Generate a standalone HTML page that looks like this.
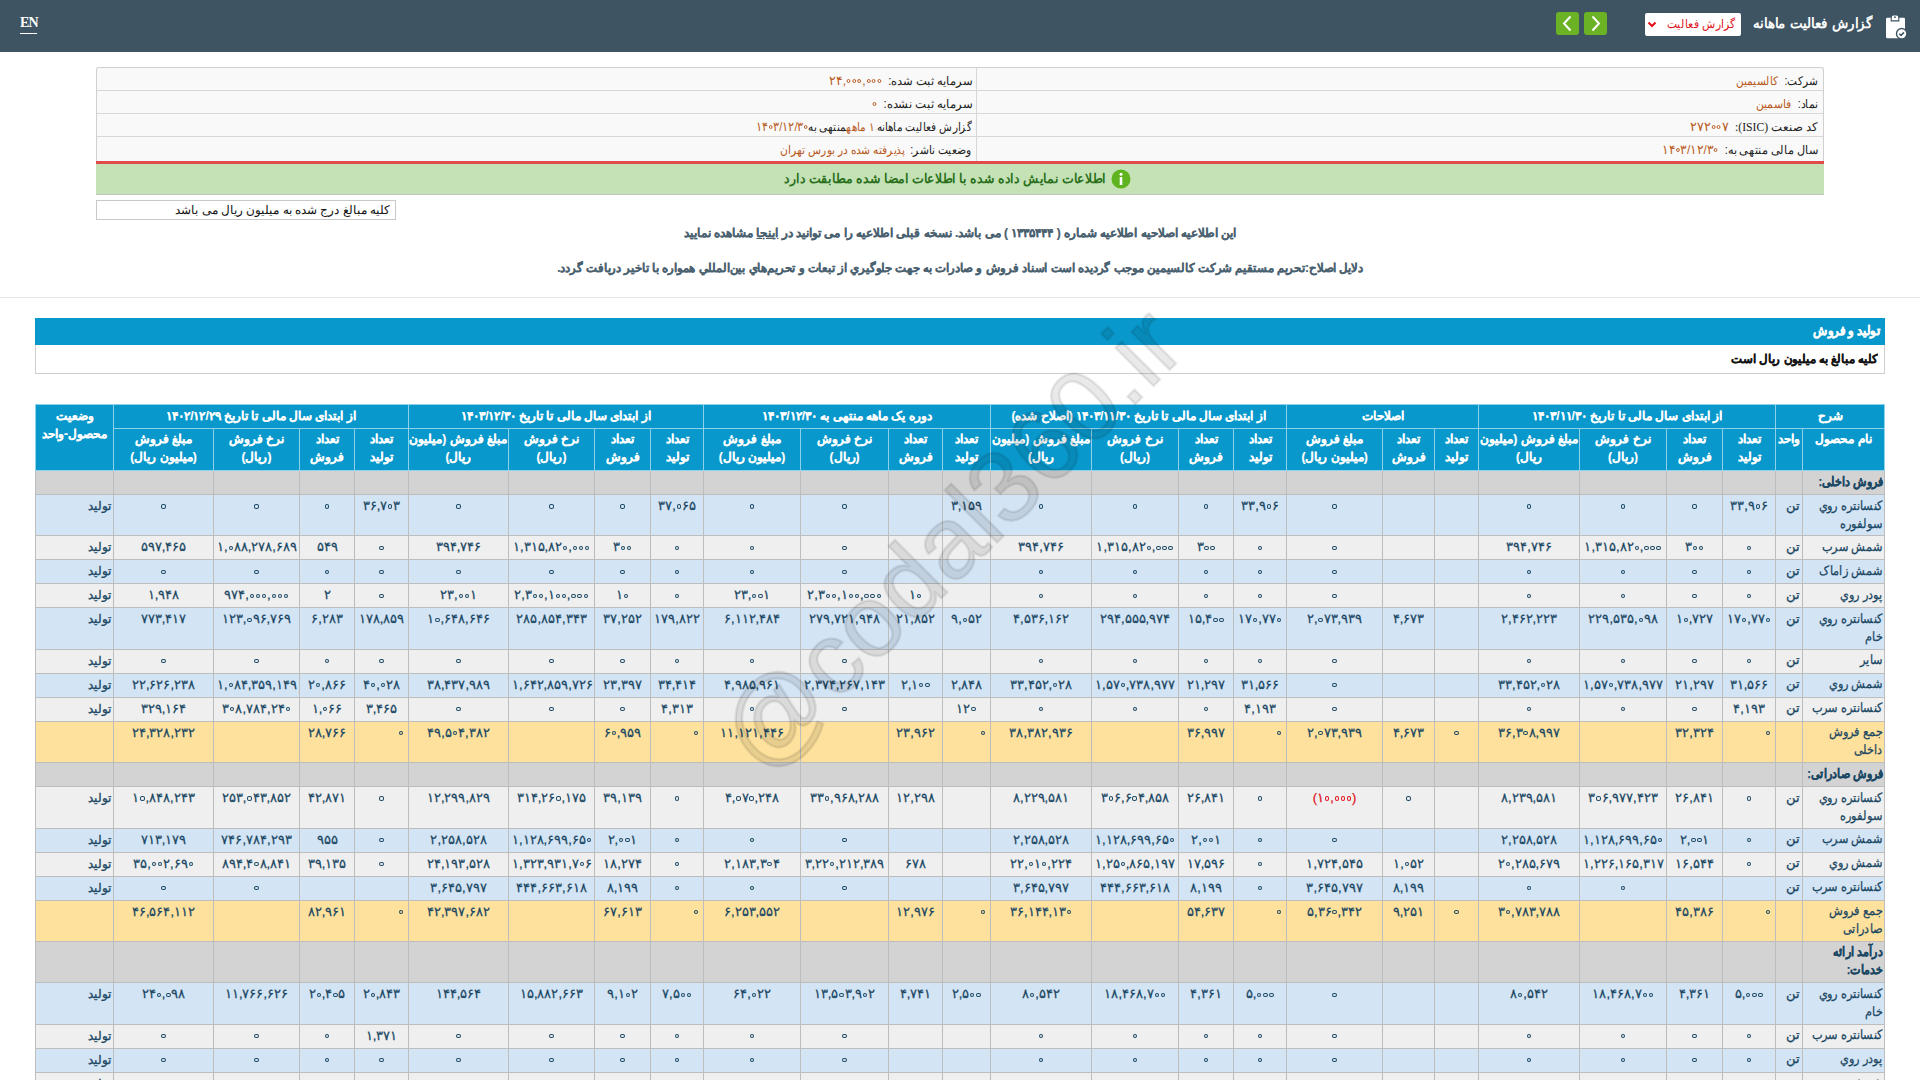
<!DOCTYPE html>
<html lang="fa" dir="rtl">
<head>
<meta charset="utf-8">
<title>گزارش فعالیت ماهانه</title>
<style>
*{box-sizing:border-box}
html,body{margin:0;padding:0;background:#fff;width:1920px;height:1080px;overflow:hidden}
body{font-family:"Liberation Sans",sans-serif;direction:rtl;position:relative;color:#333}
.nav{position:absolute;left:0;top:0;width:1920px;height:52px;background:#3e5462}
.en{position:absolute;left:20px;top:14.5px;font-family:"Liberation Serif",serif;color:#fff;font-size:14px;font-weight:bold;line-height:16px;direction:ltr;letter-spacing:-0.9px}
.en:after{content:"";position:absolute;left:0;right:1px;top:18.5px;height:1.4px;background:#fff}
.ttl{transform:scaleX(0.955);transform-origin:100% 50%;position:absolute;right:47px;top:13px;color:#fff;font-size:14px;font-weight:bold;line-height:20px;white-space:nowrap}
.clip{position:absolute;left:1884px;top:14px;width:26px;height:26px}
.sel{position:absolute;left:1645px;top:13px;width:96px;height:23px;background:#fff;border-radius:2px}
.sel span{transform:scaleX(0.9);transform-origin:100% 50%;position:absolute;right:6px;top:2px;color:#e0141e;font-size:12px;line-height:18px;white-space:nowrap}
.sel svg{position:absolute;left:2px;top:8px}
.gb{position:absolute;top:12px;width:23px;height:23px;background:#6bb325;border-radius:3px}
.gb svg{position:absolute;left:5px;top:3px}
.info{position:absolute;left:96px;top:67px;width:1728px;height:95px;background:#f9f9f9;border:1px solid #d0d0d0;border-bottom:none;border-radius:3px 3px 0 0}
.info .row{position:absolute;left:0;right:0;height:23px;border-top:1px solid #d8d8d8}
.info .vl{position:absolute;left:879px;top:0;bottom:1px;width:1px;background:#d8d8d8}
.info .c{position:absolute;top:2px;font-size:12px;line-height:18px;white-space:nowrap;color:#222}
.info .c b{font-weight:normal;color:#b85a22}
.info .c b.n{direction:ltr;unicode-bidi:isolate;display:inline-block;font-size:12.5px}
.info .c b.n i{display:inline-block;width:4px;height:4px;border:1.2px solid currentColor;border-radius:50%;margin:0 0.8px;vertical-align:2px}
.red{position:absolute;left:96px;top:161px;width:1728px;height:3px;background:#e24b4b}
.green{position:absolute;left:96px;top:164px;width:1728px;height:31px;background:#c4e2b6;border-bottom:1px solid #bcc6b8}
.green span{transform:scaleX(0.96);transform-origin:100% 50%;position:absolute;right:718px;top:5px;color:#2a701b;font-weight:bold;font-size:12.5px;line-height:20px;white-space:nowrap}
.green svg{position:absolute;left:1015px;top:5px}
.note{position:absolute;left:96px;top:200px;width:300px;height:20px;border:1px solid #c8c8c8;background:#fff}
.note span{position:absolute;right:5px;top:1px;font-size:12px;line-height:16px;color:#111;white-space:nowrap}
.l1,.l2{-webkit-text-stroke:0.2px #4a6170;position:absolute;left:0;width:1920px;text-align:center;font-weight:bold;color:#4a6170;font-size:12px;line-height:16px;white-space:nowrap}
.l1{top:225px}.l2{top:260px;transform:scaleX(0.975)}
.hr{position:absolute;left:0;top:297px;width:1920px;height:1px;background:#e6e6e6}
.bar{position:absolute;left:35px;top:318px;width:1850px;height:27px;background:#0998cb}
.bar span{transform:scaleX(0.9);transform-origin:100% 50%;-webkit-text-stroke:0.3px #fff;position:absolute;right:5px;top:4px;color:#fff;font-weight:bold;font-size:13px;line-height:18px}
.unit{position:absolute;left:35px;top:345px;width:1850px;height:29px;border:1px solid #cfcfcf;border-top:none;background:#fff}
.unit span{transform:scaleX(0.98);transform-origin:100% 50%;-webkit-text-stroke:0.2px #111;position:absolute;right:6px;top:5px;color:#111;font-weight:bold;font-size:12px;line-height:18px}
table.t{position:absolute;left:35px;top:404px;width:1850px;border-collapse:collapse;table-layout:fixed;font-size:12px}
.t th{-webkit-text-stroke:0.15px #fff;background:#0998cb;color:#fff;font-weight:bold;border:1px solid #8fd0ea;padding:0 1px;line-height:18px;vertical-align:top;text-align:center;overflow:hidden;white-space:nowrap}
.t tr.hr1 th{height:24px;padding-top:2px}
.t tr.hr2 th{height:42px;padding-top:1px}
.t td{border:1px solid #bdbdbd;padding:3px 3px 0;vertical-align:top;text-align:center;color:#1a4763;line-height:18px;white-space:nowrap;overflow:hidden}
.t td.nm{text-align:right;white-space:nowrap;padding-right:1px;padding-top:1.5px}
.t td.nm span{display:inline-block;transform:scaleX(0.87);transform-origin:100% 50%;font-size:13px;-webkit-text-stroke:0.25px currentColor}
.t td.nm.b span{transform:scaleX(0.85)}
.t td.nm.b{font-weight:bold}
.t td.u{text-align:right;padding-right:2px;padding-top:1.7px;font-size:13px;-webkit-text-stroke:0.3px currentColor}
.t td.st{text-align:right;padding-right:2px;padding-top:2px;-webkit-text-stroke:0.35px currentColor}
.t td.neg{color:#e0141e;-webkit-text-stroke:0.1px currentColor}
.t td.n{padding-top:2px;direction:ltr;font-size:13px;font-weight:normal;-webkit-text-stroke:0.25px currentColor}
.t td.n i{display:inline-block;width:4.3px;height:4.2px;border:1.3px solid currentColor;border-radius:50%;margin:0 0.9px;vertical-align:1.5px}
.t td.r{text-align:right;padding-right:4px}
.t tr.h1 td{height:24px}
.t tr.h2 td{height:41.4px}
.t tr.b td{background:#d3e4f5}
.t tr.g td{background:#efefef}
.t tr.y td{background:#fde19c}
.t tr.s td{background:#d3d3d3}
.wm{position:absolute;left:951px;top:539px;width:0;height:0}
.wm span{position:absolute;left:-400px;top:-60px;width:800px;text-align:center;font-size:102px;line-height:120px;font-weight:normal;color:rgba(0,0,0,0.085);transform:rotate(-45deg);white-space:nowrap;direction:ltr;font-family:"Liberation Sans",sans-serif;-webkit-text-stroke:2.5px rgba(0,0,0,0.085)}
</style>
</head>
<body>
<div class="nav">
  <div class="en">EN</div>
  <svg class="clip" viewBox="0 0 26 26" width="26" height="26">
    <rect x="2" y="3.7" width="19" height="20.6" rx="1.3" fill="#fff"/>
    <path d="M7.2 6.9 L7.2 3.6 Q7.2 1 9.5 1 L12.5 1 Q14.8 1 14.8 3.6 L14.8 6.9 Z" fill="#fff" stroke="#3e5462" stroke-width="1.1"/>
    <circle cx="11" cy="3.2" r="0.9" fill="#3e5462"/>
    <circle cx="17.7" cy="19.7" r="5.2" fill="#fff" stroke="#3e5462" stroke-width="1.4"/>
    <path d="M15.3 19.8 l1.7 1.6 l3 -3" fill="none" stroke="#3e5462" stroke-width="1.5"/>
  </svg>
  <div class="ttl">گزارش فعالیت ماهانه</div>
  <div class="sel"><span>گزارش فعالیت</span>
    <svg width="10" height="7" viewBox="0 0 10 7"><path d="M1.5 1.5 L5 5 L8.5 1.5" fill="none" stroke="#e0141e" stroke-width="2.2"/></svg>
  </div>
  <div class="gb" style="left:1584px"><svg width="13" height="17" viewBox="0 0 13 17"><path d="M3.5 1.5 L10 8.5 L3.5 15.5" fill="none" stroke="#fff" stroke-width="2"/></svg></div>
  <div class="gb" style="left:1556px"><svg width="13" height="17" viewBox="0 0 13 17"><path d="M9.5 1.5 L3 8.5 L9.5 15.5" fill="none" stroke="#fff" stroke-width="2"/></svg></div>
</div>

<div class="info">
  <div class="row" style="top:-1px;border-top:none"></div>
  <div class="row" style="top:22px"></div>
  <div class="row" style="top:45px"></div>
  <div class="row" style="top:68px"></div>
  <div class="vl"></div>
  <div class="c" style="right:5px;top:4px;transform:scaleX(0.875);transform-origin:100% 50%">شرکت: &nbsp;<b>کالسیمین</b></div>
  <div class="c" style="right:5px;top:27px;transform:scaleX(0.905);transform-origin:100% 50%">نماد: &nbsp;<b>فاسمین</b></div>
  <div class="c" style="right:5px;top:50px;transform:scaleX(0.975);transform-origin:100% 50%">کد صنعت <span style="font-family:'Liberation Serif',serif">(ISIC):</span> &nbsp;<b class="n">۲۷۲<i></i><i></i>۷</b></div>
  <div class="c" style="right:5px;top:73px;transform:scaleX(0.94);transform-origin:100% 50%">سال مالی منتهی به: &nbsp;<b class="n">۱۴<i></i>۳/۱۲/۳<i></i></b></div>
  <div class="c" style="right:851px;top:4px;transform:scaleX(0.965);transform-origin:100% 50%">سرمایه ثبت شده: &nbsp;<b class="n">۲۴,<i></i><i></i><i></i>,<i></i><i></i><i></i></b></div>
  <div class="c" style="right:851px;top:27px;transform:scaleX(0.975);transform-origin:100% 50%">سرمایه ثبت نشده: &nbsp;<b class="n"><i></i></b></div>
  <div class="c" style="right:851px;top:50px;transform:scaleX(0.875);transform-origin:100% 50%">گزارش فعالیت ماهانه <b>۱ ماهه</b>منتهی به<b class="n">۱۴<i></i>۳/۱۲/۳<i></i></b></div>
  <div class="c" style="right:851px;top:73px;transform:scaleX(0.893);transform-origin:100% 50%">وضعیت ناشر: &nbsp;<b>پذیرفته شده در بورس تهران</b></div>
</div>
<div class="red"></div>
<div class="green"><span>اطلاعات نمایش داده شده با اطلاعات امضا شده مطابقت دارد</span>
  <svg width="20" height="20" viewBox="0 0 20 20"><circle cx="10" cy="10" r="9.5" fill="#5fb31e"/><circle cx="10" cy="5.2" r="1.5" fill="#fff"/><rect x="8.7" y="8" width="2.6" height="8" fill="#fff"/></svg>
</div>
<div class="note"><span>کلیه مبالغ درج شده به میلیون ریال می باشد</span></div>
<div class="l1">این اطلاعیه اصلاحیه اطلاعیه شماره ( ۱۳۳۵۴۴۴ ) می باشد. نسخه قبلی اطلاعیه را می توانید در <u>اینجا</u> مشاهده نمایید</div>
<div class="l2">دلایل اصلاح:تحریم مستقیم شرکت کالسیمین موجب گردیده است اسناد فروش و صادرات به جهت جلوگيري از تبعات و تحريم‌هاي بين‌المللي همواره با تاخیر دريافت گردد.</div>
<div class="hr"></div>
<div class="bar"><span>تولید و فروش</span></div>
<div class="unit"><span>کلیه مبالغ به میلیون ریال است</span></div>

<table class="t">
<colgroup><col style="width:82px"><col style="width:27px"><col style="width:53px"><col style="width:56px"><col style="width:87px"><col style="width:101px"><col style="width:44px"><col style="width:52px"><col style="width:96px"><col style="width:53px"><col style="width:55px"><col style="width:87px"><col style="width:101px"><col style="width:48px"><col style="width:54px"><col style="width:88px"><col style="width:97px"><col style="width:53px"><col style="width:56px"><col style="width:86px"><col style="width:100px"><col style="width:54px"><col style="width:55px"><col style="width:86px"><col style="width:100px"><col style="width:78px"></colgroup>
<thead>
<tr class="hr1"><th colspan="2">شرح</th><th colspan="4">از ابتدای سال مالی تا تاریخ ۱۴۰۳/۱۱/۳۰</th><th colspan="3">اصلاحات</th><th colspan="4">از ابتدای سال مالی تا تاریخ ۱۴۰۳/۱۱/۳۰ (اصلاح شده)</th><th colspan="4">دوره یک ماهه منتهی به ۱۴۰۳/۱۲/۳۰</th><th colspan="4">از ابتدای سال مالی تا تاریخ ۱۴۰۳/۱۲/۳۰</th><th colspan="4">از ابتدای سال مالی تا تاریخ ۱۴۰۲/۱۲/۲۹</th><th rowspan="2">وضعیت<br>محصول-واحد</th></tr>
<tr class="hr2"><th>نام محصول</th><th>واحد</th>
<th>تعداد<br>تولید</th><th>تعداد<br>فروش</th><th>نرخ فروش<br>(ریال)</th><th>مبلغ فروش (میلیون<br>ریال)</th>
<th>تعداد<br>تولید</th><th>تعداد<br>فروش</th><th>مبلغ فروش<br>(میلیون ریال)</th>
<th>تعداد<br>تولید</th><th>تعداد<br>فروش</th><th>نرخ فروش<br>(ریال)</th><th>مبلغ فروش (میلیون<br>ریال)</th>
<th>تعداد<br>تولید</th><th>تعداد<br>فروش</th><th>نرخ فروش<br>(ریال)</th><th>مبلغ فروش<br>(میلیون ریال)</th>
<th>تعداد<br>تولید</th><th>تعداد<br>فروش</th><th>نرخ فروش<br>(ریال)</th><th>مبلغ فروش (میلیون<br>ریال)</th>
<th>تعداد<br>تولید</th><th>تعداد<br>فروش</th><th>نرخ فروش<br>(ریال)</th><th>مبلغ فروش<br>(میلیون ریال)</th>
</tr>
</thead>
<tbody>
<tr class="s h1"><td class="nm b"><span>فروش داخلی:</span></td><td></td><td></td><td></td><td></td><td></td><td></td><td></td><td></td><td></td><td></td><td></td><td></td><td></td><td></td><td></td><td></td><td></td><td></td><td></td><td></td><td></td><td></td><td></td><td></td><td></td></tr>
<tr class="b h2"><td class="nm"><span>کنسانتره روي<br>سولفوره</span></td><td class="u">تن</td><td class="n">۳۳,۹<i></i>۶</td><td class="n"><i></i></td><td class="n"><i></i></td><td class="n"><i></i></td><td></td><td></td><td class="n"><i></i></td><td class="n">۳۳,۹<i></i>۶</td><td class="n"><i></i></td><td class="n"><i></i></td><td class="n"><i></i></td><td class="n">۳,۱۵۹</td><td></td><td class="n"><i></i></td><td class="n"><i></i></td><td class="n">۳۷,<i></i>۶۵</td><td class="n"><i></i></td><td class="n"><i></i></td><td class="n"><i></i></td><td class="n">۳۶,۷<i></i>۳</td><td class="n"><i></i></td><td class="n"><i></i></td><td class="n"><i></i></td><td class="st">تولید</td></tr>
<tr class="g h1"><td class="nm"><span>شمش سرب</span></td><td class="u">تن</td><td class="n"><i></i></td><td class="n">۳<i></i><i></i></td><td class="n">۱,۳۱۵,۸۲<i></i>,<i></i><i></i><i></i></td><td class="n">۳۹۴,۷۴۶</td><td></td><td></td><td class="n"><i></i></td><td class="n"><i></i></td><td class="n">۳<i></i><i></i></td><td class="n">۱,۳۱۵,۸۲<i></i>,<i></i><i></i><i></i></td><td class="n">۳۹۴,۷۴۶</td><td></td><td></td><td class="n"><i></i></td><td class="n"><i></i></td><td class="n"><i></i></td><td class="n">۳<i></i><i></i></td><td class="n">۱,۳۱۵,۸۲<i></i>,<i></i><i></i><i></i></td><td class="n">۳۹۴,۷۴۶</td><td class="n"><i></i></td><td class="n">۵۴۹</td><td class="n">۱,<i></i>۸۸,۲۷۸,۶۸۹</td><td class="n">۵۹۷,۴۶۵</td><td class="st">تولید</td></tr>
<tr class="b h1"><td class="nm"><span>شمش زاماک</span></td><td class="u">تن</td><td class="n"><i></i></td><td class="n"><i></i></td><td class="n"><i></i></td><td class="n"><i></i></td><td></td><td></td><td class="n"><i></i></td><td class="n"><i></i></td><td class="n"><i></i></td><td class="n"><i></i></td><td class="n"><i></i></td><td></td><td></td><td class="n"><i></i></td><td class="n"><i></i></td><td class="n"><i></i></td><td class="n"><i></i></td><td class="n"><i></i></td><td class="n"><i></i></td><td class="n"><i></i></td><td class="n"><i></i></td><td class="n"><i></i></td><td class="n"><i></i></td><td class="st">تولید</td></tr>
<tr class="g h1"><td class="nm"><span>پودر روي</span></td><td class="u">تن</td><td class="n"><i></i></td><td class="n"><i></i></td><td class="n"><i></i></td><td class="n"><i></i></td><td></td><td></td><td class="n"><i></i></td><td class="n"><i></i></td><td class="n"><i></i></td><td class="n"><i></i></td><td class="n"><i></i></td><td></td><td class="n">۱<i></i></td><td class="n">۲,۳<i></i><i></i>,۱<i></i><i></i>,<i></i><i></i><i></i></td><td class="n">۲۳,<i></i><i></i>۱</td><td class="n"><i></i></td><td class="n">۱<i></i></td><td class="n">۲,۳<i></i><i></i>,۱<i></i><i></i>,<i></i><i></i><i></i></td><td class="n">۲۳,<i></i><i></i>۱</td><td class="n"><i></i></td><td class="n">۲</td><td class="n">۹۷۴,<i></i><i></i><i></i>,<i></i><i></i><i></i></td><td class="n">۱,۹۴۸</td><td class="st">تولید</td></tr>
<tr class="b h2"><td class="nm"><span>کنسانتره روي<br>خام</span></td><td class="u">تن</td><td class="n">۱۷<i></i>,۷۷<i></i></td><td class="n">۱<i></i>,۷۲۷</td><td class="n">۲۲۹,۵۳۵,<i></i>۹۸</td><td class="n">۲,۴۶۲,۲۲۳</td><td></td><td class="n">۴,۶۷۳</td><td class="n">۲,<i></i>۷۳,۹۳۹</td><td class="n">۱۷<i></i>,۷۷<i></i></td><td class="n">۱۵,۴<i></i><i></i></td><td class="n">۲۹۴,۵۵۵,۹۷۴</td><td class="n">۴,۵۳۶,۱۶۲</td><td class="n">۹,<i></i>۵۲</td><td class="n">۲۱,۸۵۲</td><td class="n">۲۷۹,۷۲۱,۹۴۸</td><td class="n">۶,۱۱۲,۴۸۴</td><td class="n">۱۷۹,۸۲۲</td><td class="n">۳۷,۲۵۲</td><td class="n">۲۸۵,۸۵۴,۳۴۳</td><td class="n">۱<i></i>,۶۴۸,۶۴۶</td><td class="n">۱۷۸,۸۵۹</td><td class="n">۶,۲۸۳</td><td class="n">۱۲۳,<i></i>۹۶,۷۶۹</td><td class="n">۷۷۳,۴۱۷</td><td class="st">تولید</td></tr>
<tr class="g h1"><td class="nm"><span>ساير</span></td><td class="u">تن</td><td class="n"><i></i></td><td class="n"><i></i></td><td class="n"><i></i></td><td class="n"><i></i></td><td></td><td></td><td class="n"><i></i></td><td class="n"><i></i></td><td class="n"><i></i></td><td class="n"><i></i></td><td class="n"><i></i></td><td></td><td></td><td class="n"><i></i></td><td class="n"><i></i></td><td class="n"><i></i></td><td class="n"><i></i></td><td class="n"><i></i></td><td class="n"><i></i></td><td class="n"><i></i></td><td class="n"><i></i></td><td class="n"><i></i></td><td class="n"><i></i></td><td class="st">تولید</td></tr>
<tr class="b h1"><td class="nm"><span>شمش روي</span></td><td class="u">تن</td><td class="n">۳۱,۵۶۶</td><td class="n">۲۱,۲۹۷</td><td class="n">۱,۵۷<i></i>,۷۳۸,۹۷۷</td><td class="n">۳۳,۴۵۲,<i></i>۲۸</td><td></td><td></td><td class="n"><i></i></td><td class="n">۳۱,۵۶۶</td><td class="n">۲۱,۲۹۷</td><td class="n">۱,۵۷<i></i>,۷۳۸,۹۷۷</td><td class="n">۳۳,۴۵۲,<i></i>۲۸</td><td class="n">۲,۸۴۸</td><td class="n">۲,۱<i></i><i></i></td><td class="n">۲,۳۷۴,۲۶۷,۱۴۳</td><td class="n">۴,۹۸۵,۹۶۱</td><td class="n">۳۴,۴۱۴</td><td class="n">۲۳,۳۹۷</td><td class="n">۱,۶۴۲,۸۵۹,۷۲۶</td><td class="n">۳۸,۴۳۷,۹۸۹</td><td class="n">۴<i></i>,<i></i>۲۸</td><td class="n">۲<i></i>,۸۶۶</td><td class="n">۱,<i></i>۸۴,۳۵۹,۱۴۹</td><td class="n">۲۲,۶۲۶,۲۳۸</td><td class="st">تولید</td></tr>
<tr class="g h1"><td class="nm"><span>کنسانتره سرب</span></td><td class="u">تن</td><td class="n">۴,۱۹۳</td><td class="n"><i></i></td><td class="n"><i></i></td><td class="n"><i></i></td><td></td><td></td><td class="n"><i></i></td><td class="n">۴,۱۹۳</td><td class="n"><i></i></td><td class="n"><i></i></td><td class="n"><i></i></td><td class="n">۱۲<i></i></td><td></td><td class="n"><i></i></td><td class="n"><i></i></td><td class="n">۴,۳۱۳</td><td class="n"><i></i></td><td class="n"><i></i></td><td class="n"><i></i></td><td class="n">۳,۴۶۵</td><td class="n">۱,<i></i>۶۶</td><td class="n">۳<i></i>۸,۷۸۴,۲۴<i></i></td><td class="n">۳۲۹,۱۶۴</td><td class="st">تولید</td></tr>
<tr class="y h2"><td class="nm t"><span>جمع فروش<br>داخلی</span></td><td class="u"></td><td class="r n"><i></i></td><td class="n">۳۲,۳۲۴</td><td></td><td class="n">۳۶,۳<i></i>۸,۹۹۷</td><td class="n"><i></i></td><td class="n">۴,۶۷۳</td><td class="n">۲,<i></i>۷۳,۹۳۹</td><td class="r n"><i></i></td><td class="n">۳۶,۹۹۷</td><td></td><td class="n">۳۸,۳۸۲,۹۳۶</td><td class="r n"><i></i></td><td class="n">۲۳,۹۶۲</td><td></td><td class="n">۱۱,۱۲۱,۴۴۶</td><td class="r n"><i></i></td><td class="n">۶<i></i>,۹۵۹</td><td></td><td class="n">۴۹,۵<i></i>۴,۳۸۲</td><td class="r n"><i></i></td><td class="n">۲۸,۷۶۶</td><td></td><td class="n">۲۴,۳۲۸,۲۳۲</td><td class="st"></td></tr>
<tr class="s h1"><td class="nm b"><span>فروش صادراتی:</span></td><td></td><td></td><td></td><td></td><td></td><td></td><td></td><td></td><td></td><td></td><td></td><td></td><td></td><td></td><td></td><td></td><td></td><td></td><td></td><td></td><td></td><td></td><td></td><td></td><td></td></tr>
<tr class="g h2"><td class="nm"><span>کنسانتره روي<br>سولفوره</span></td><td class="u">تن</td><td class="n"><i></i></td><td class="n">۲۶,۸۴۱</td><td class="n">۳<i></i>۶,۹۷۷,۴۲۳</td><td class="n">۸,۲۳۹,۵۸۱</td><td></td><td class="n"><i></i></td><td class="neg n">(۱<i></i>,<i></i><i></i><i></i>)</td><td class="n"><i></i></td><td class="n">۲۶,۸۴۱</td><td class="n">۳<i></i>۶,۶<i></i>۴,۸۵۸</td><td class="n">۸,۲۲۹,۵۸۱</td><td></td><td class="n">۱۲,۲۹۸</td><td class="n">۳۳<i></i>,۹۶۸,۲۸۸</td><td class="n">۴,<i></i>۷<i></i>,۲۴۸</td><td class="n"><i></i></td><td class="n">۳۹,۱۳۹</td><td class="n">۳۱۴,۲۶<i></i>,۱۷۵</td><td class="n">۱۲,۲۹۹,۸۲۹</td><td class="n"><i></i></td><td class="n">۴۲,۸۷۱</td><td class="n">۲۵۳,<i></i>۴۳,۸۵۲</td><td class="n">۱<i></i>,۸۴۸,۲۴۳</td><td class="st">تولید</td></tr>
<tr class="b h1"><td class="nm"><span>شمش سرب</span></td><td class="u">تن</td><td class="n"><i></i></td><td class="n">۲,<i></i><i></i>۱</td><td class="n">۱,۱۲۸,۶۹۹,۶۵<i></i></td><td class="n">۲,۲۵۸,۵۲۸</td><td></td><td></td><td class="n"><i></i></td><td class="n"><i></i></td><td class="n">۲,<i></i><i></i>۱</td><td class="n">۱,۱۲۸,۶۹۹,۶۵<i></i></td><td class="n">۲,۲۵۸,۵۲۸</td><td></td><td></td><td class="n"><i></i></td><td class="n"><i></i></td><td class="n"><i></i></td><td class="n">۲,<i></i><i></i>۱</td><td class="n">۱,۱۲۸,۶۹۹,۶۵<i></i></td><td class="n">۲,۲۵۸,۵۲۸</td><td class="n"><i></i></td><td class="n">۹۵۵</td><td class="n">۷۴۶,۷۸۴,۲۹۳</td><td class="n">۷۱۳,۱۷۹</td><td class="st">تولید</td></tr>
<tr class="g h1"><td class="nm"><span>شمش روي</span></td><td class="u">تن</td><td class="n"><i></i></td><td class="n">۱۶,۵۴۴</td><td class="n">۱,۲۲۶,۱۶۵,۳۱۷</td><td class="n">۲<i></i>,۲۸۵,۶۷۹</td><td></td><td class="n">۱,<i></i>۵۲</td><td class="n">۱,۷۲۴,۵۴۵</td><td class="n"><i></i></td><td class="n">۱۷,۵۹۶</td><td class="n">۱,۲۵<i></i>,۸۶۵,۱۹۷</td><td class="n">۲۲,<i></i>۱<i></i>,۲۲۴</td><td></td><td class="n">۶۷۸</td><td class="n">۳,۲۲<i></i>,۲۱۲,۳۸۹</td><td class="n">۲,۱۸۳,۳<i></i>۴</td><td class="n"><i></i></td><td class="n">۱۸,۲۷۴</td><td class="n">۱,۳۲۳,۹۳۱,۷<i></i>۶</td><td class="n">۲۴,۱۹۳,۵۲۸</td><td class="n"><i></i></td><td class="n">۳۹,۱۳۵</td><td class="n">۸۹۴,۴<i></i>۸,۸۴۱</td><td class="n">۳۵,<i></i><i></i>۲,۶۹<i></i></td><td class="st">تولید</td></tr>
<tr class="b h1"><td class="nm"><span>کنسانتره سرب</span></td><td class="u">تن</td><td></td><td></td><td class="n"><i></i></td><td class="n"><i></i></td><td></td><td class="n">۸,۱۹۹</td><td class="n">۳,۶۴۵,۷۹۷</td><td class="n"><i></i></td><td class="n">۸,۱۹۹</td><td class="n">۴۴۴,۶۶۳,۶۱۸</td><td class="n">۳,۶۴۵,۷۹۷</td><td></td><td></td><td class="n"><i></i></td><td class="n"><i></i></td><td class="n"><i></i></td><td class="n">۸,۱۹۹</td><td class="n">۴۴۴,۶۶۳,۶۱۸</td><td class="n">۳,۶۴۵,۷۹۷</td><td></td><td></td><td class="n"><i></i></td><td class="n"><i></i></td><td class="st">تولید</td></tr>
<tr class="y h2"><td class="nm t"><span>جمع فروش<br>صادراتی</span></td><td class="u"></td><td class="r n"><i></i></td><td class="n">۴۵,۳۸۶</td><td></td><td class="n">۳<i></i>,۷۸۳,۷۸۸</td><td class="n"><i></i></td><td class="n">۹,۲۵۱</td><td class="n">۵,۳۶<i></i>,۳۴۲</td><td class="r n"><i></i></td><td class="n">۵۴,۶۳۷</td><td></td><td class="n">۳۶,۱۴۴,۱۳<i></i></td><td class="r n"><i></i></td><td class="n">۱۲,۹۷۶</td><td></td><td class="n">۶,۲۵۳,۵۵۲</td><td class="r n"><i></i></td><td class="n">۶۷,۶۱۳</td><td></td><td class="n">۴۲,۳۹۷,۶۸۲</td><td class="r n"><i></i></td><td class="n">۸۲,۹۶۱</td><td></td><td class="n">۴۶,۵۶۴,۱۱۲</td><td class="st"></td></tr>
<tr class="s h2"><td class="nm b"><span>درآمد ارائه<br>خدمات:</span></td><td></td><td></td><td></td><td></td><td></td><td></td><td></td><td></td><td></td><td></td><td></td><td></td><td></td><td></td><td></td><td></td><td></td><td></td><td></td><td></td><td></td><td></td><td></td><td></td><td></td></tr>
<tr class="b h2"><td class="nm"><span>کنسانتره روي<br>خام</span></td><td class="u">تن</td><td class="n">۵,<i></i><i></i><i></i></td><td class="n">۴,۳۶۱</td><td class="n">۱۸,۴۶۸,۷<i></i><i></i></td><td class="n">۸<i></i>,۵۴۲</td><td></td><td></td><td class="n"><i></i></td><td class="n">۵,<i></i><i></i><i></i></td><td class="n">۴,۳۶۱</td><td class="n">۱۸,۴۶۸,۷<i></i><i></i></td><td class="n">۸<i></i>,۵۴۲</td><td class="n">۲,۵<i></i><i></i></td><td class="n">۴,۷۴۱</td><td class="n">۱۳,۵<i></i>۳,۹<i></i>۲</td><td class="n">۶۴,<i></i>۲۲</td><td class="n">۷,۵<i></i><i></i></td><td class="n">۹,۱<i></i>۲</td><td class="n">۱۵,۸۸۲,۶۶۳</td><td class="n">۱۴۴,۵۶۴</td><td class="n">۲<i></i>,۸۴۳</td><td class="n">۲<i></i>,۴<i></i>۵</td><td class="n">۱۱,۷۶۶,۶۲۶</td><td class="n">۲۴<i></i>,<i></i>۹۸</td><td class="st">تولید</td></tr>
<tr class="g h1"><td class="nm"><span>کنسانتره سرب</span></td><td class="u">تن</td><td class="n"><i></i></td><td class="n"><i></i></td><td class="n"><i></i></td><td class="n"><i></i></td><td></td><td></td><td class="n"><i></i></td><td class="n"><i></i></td><td class="n"><i></i></td><td class="n"><i></i></td><td class="n"><i></i></td><td></td><td></td><td class="n"><i></i></td><td class="n"><i></i></td><td class="n"><i></i></td><td class="n"><i></i></td><td class="n"><i></i></td><td class="n"><i></i></td><td class="n">۱,۳۷۱</td><td class="n"><i></i></td><td class="n"><i></i></td><td class="n"><i></i></td><td class="st">تولید</td></tr>
<tr class="b h1"><td class="nm"><span>پودر روي</span></td><td class="u">تن</td><td class="n"><i></i></td><td class="n"><i></i></td><td class="n"><i></i></td><td class="n"><i></i></td><td></td><td></td><td class="n"><i></i></td><td class="n"><i></i></td><td class="n"><i></i></td><td class="n"><i></i></td><td class="n"><i></i></td><td></td><td></td><td class="n"><i></i></td><td class="n"><i></i></td><td class="n"><i></i></td><td class="n"><i></i></td><td class="n"><i></i></td><td class="n"><i></i></td><td class="n"><i></i></td><td class="n"><i></i></td><td class="n"><i></i></td><td class="n"><i></i></td><td class="st">تولید</td></tr>
<tr class="g h2"><td class="nm"><span>شمش روي</span></td><td class="u">تن</td><td class="n"><i></i></td><td class="n"><i></i></td><td class="n"><i></i></td><td class="n"><i></i></td><td></td><td></td><td class="n"><i></i></td><td class="n"><i></i></td><td class="n"><i></i></td><td class="n"><i></i></td><td class="n"><i></i></td><td></td><td></td><td class="n"><i></i></td><td class="n"><i></i></td><td class="n"><i></i></td><td class="n"><i></i></td><td class="n"><i></i></td><td class="n"><i></i></td><td class="n"><i></i></td><td class="n"><i></i></td><td class="n"><i></i></td><td class="n"><i></i></td><td class="st">تولید</td></tr>
</tbody>
</table>
<div class="wm"><span>@codal360.ir</span></div>
</body>
</html>
